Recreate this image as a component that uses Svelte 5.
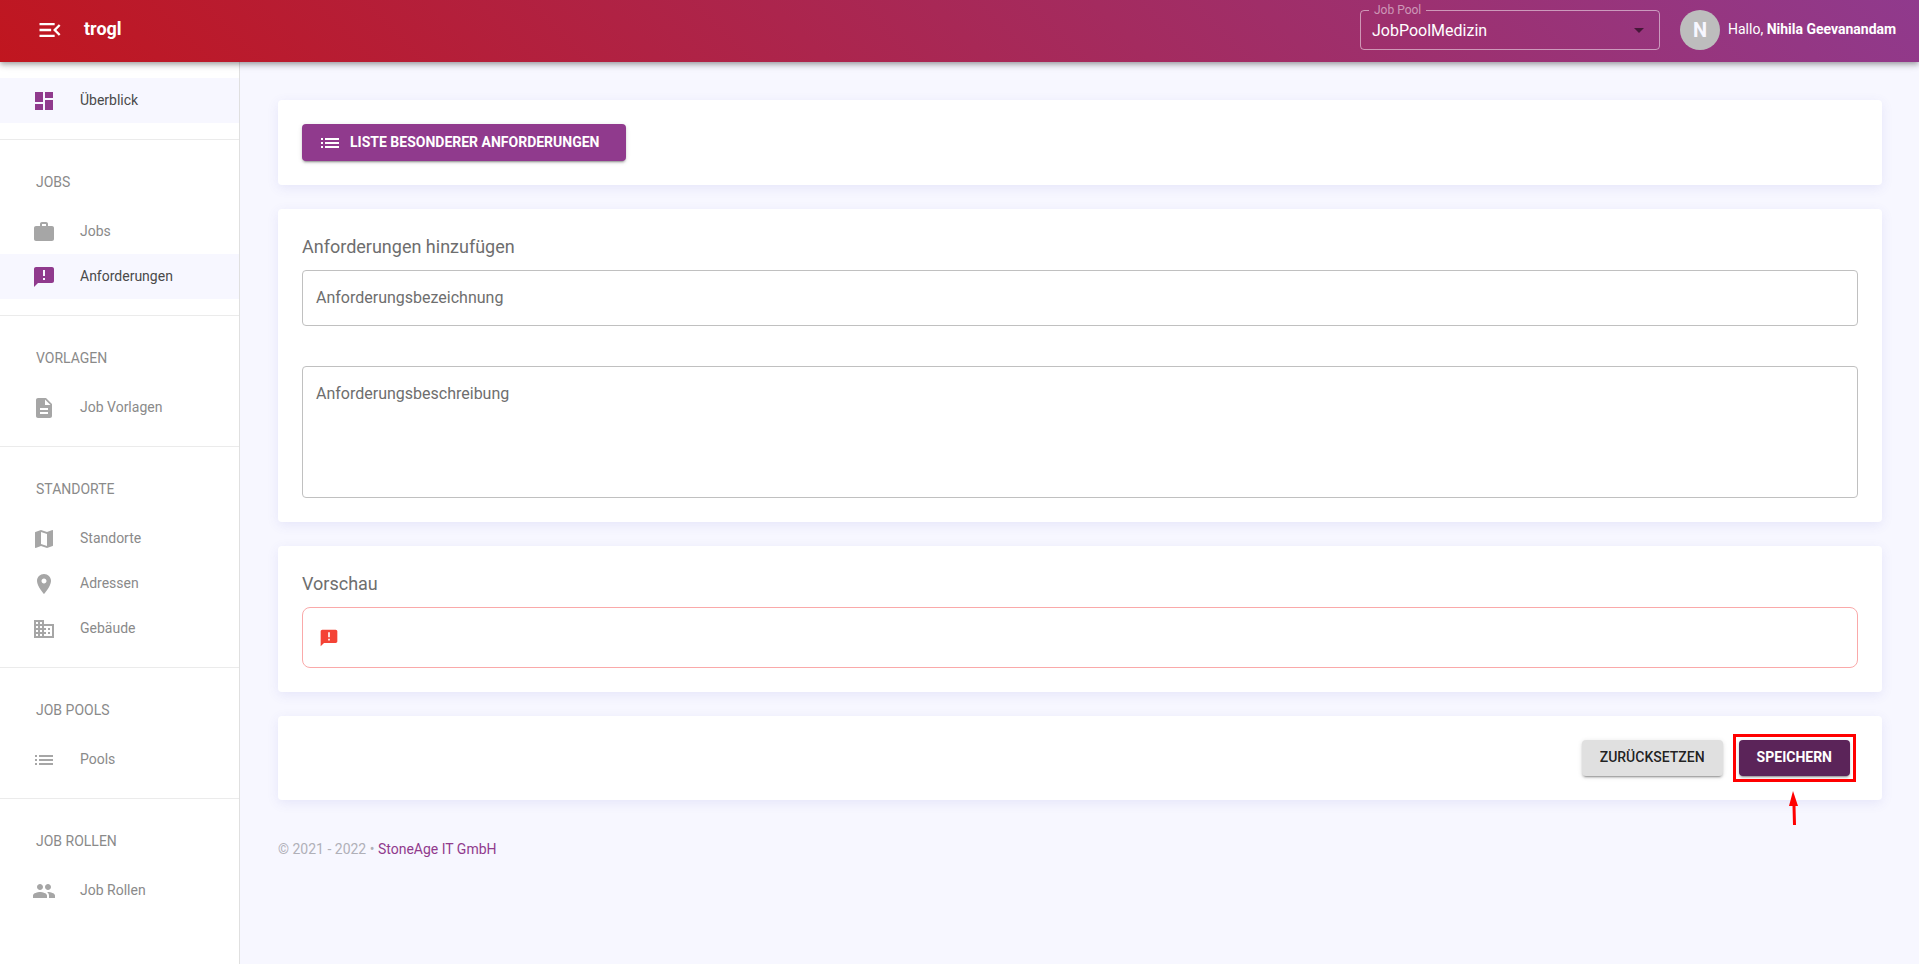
<script>
  const icons = {
    dashboard: "M3 13h8V3H3v10zm0 8h8v-6H3v6zm10 0h8V11h-8v10zm0-18v6h8V3h-8z",
    work: "M20 6h-4V4c0-1.11-.89-2-2-2h-4c-1.11 0-2 .89-2 2v2H4c-1.11 0-1.99.89-1.99 2L2 19c0 1.11.89 2 2 2h16c1.11 0 2-.89 2-2V8c0-1.11-.89-2-2-2zm-6 0h-4V4h4v2z",
    announcement:
      "M20 2H4c-1.1 0-1.99.9-1.99 2L2 22l4-4h14c1.1 0 2-.9 2-2V4c0-1.1-.9-2-2-2zm-7 9h-2V5h2v6zm0 4h-2v-2h2v2z",
    description:
      "M14 2H6c-1.1 0-1.99.9-1.99 2L4 20c0 1.1.89 2 1.99 2H18c1.1 0 2-.9 2-2V8l-6-6zm2 16H8v-2h8v2zm0-4H8v-2h8v2zm-3-5V3.5L18.5 9H13z",
    map: "M20.5 3l-.16.03L15 5.1 9 3 3.36 4.9c-.21.07-.36.25-.36.48V20.5c0 .28.22.5.5.5l.16-.03L9 18.9l6 2.1 5.64-1.9c.21-.07.36-.25.36-.48V3.5c0-.28-.22-.5-.5-.5zM15 19l-6-2.11V5l6 2.11V19z",
    place:
      "M12 2C8.13 2 5 5.13 5 9c0 5.25 7 13 7 13s7-7.75 7-13c0-3.87-3.13-7-7-7zm0 9.5c-1.38 0-2.5-1.12-2.5-2.5s1.12-2.5 2.5-2.5 2.5 1.12 2.5 2.5-1.12 2.5-2.5 2.5z",
    business:
      "M12 7V3H2v18h20V7H12zM6 19H4v-2h2v2zm0-4H4v-2h2v2zm0-4H4V9h2v2zm0-4H4V5h2v2zm4 12H8v-2h2v2zm0-4H8v-2h2v2zm0-4H8V9h2v2zm0-4H8V5h2v2zm10 12h-8v-2h2v-2h-2v-2h2v-2h-2V9h8v10zm-2-8h-2v2h2v-2zm0 4h-2v2h2v-2z",
    list: "M3 13h2v-2H3v2zm0 4h2v-2H3v2zm0-8h2V7H3v2zm4 4h14v-2H7v2zm0 4h14v-2H7v2zM7 7v2h14V7H7z",
    people:
      "M16 11c1.66 0 2.99-1.34 2.99-3S17.66 5 16 5c-1.66 0-3 1.34-3 3s1.34 3 3 3zm-8 0c1.66 0 2.99-1.34 2.99-3S9.66 5 8 5C6.34 5 5 6.34 5 8s1.34 3 3 3zm0 2c-2.33 0-7 1.17-7 3.5V19h14v-2.5c0-2.33-4.67-3.5-7-3.5zm8 0c-.29 0-.62.02-.97.05 1.16.84 1.97 1.97 1.97 3.45V19h6v-2.5c0-2.33-4.67-3.5-7-3.5z",
    menuOpen:
      "M3 18h13v-2H3v2zm0-5h10v-2H3v2zm0-7v2h13V6H3zm18 9.59L17.42 12 21 8.41 19.59 7l-5 5 5 5L21 15.59z",
  };

  const sections = [
    { items: [{ label: "Überblick", icon: "dashboard", active: true }] },
    {
      title: "Jobs",
      items: [
        { label: "Jobs", icon: "work" },
        { label: "Anforderungen", icon: "announcement", active: true },
      ],
    },
    {
      title: "Vorlagen",
      items: [{ label: "Job Vorlagen", icon: "description" }],
    },
    {
      title: "Standorte",
      items: [
        { label: "Standorte", icon: "map" },
        { label: "Adressen", icon: "place" },
        { label: "Gebäude", icon: "business" },
      ],
    },
    { title: "Job Pools", items: [{ label: "Pools", icon: "list" }] },
    { title: "Job Rollen", items: [{ label: "Job Rollen", icon: "people" }] },
  ];

  let pool = "JobPoolMedizin";
  let name = "";
  let description = "";

  const reset = () => {
    name = "";
    description = "";
  };
</script>

<header class="topbar">
  <button class="menu-btn" aria-label="Menü">
    <svg viewBox="0 0 24 24" width="28" height="28"><path d={icons.menuOpen} /></svg>
  </button>
  <span class="brand">trogl</span>

  <fieldset class="pool">
    <legend><label for="pool">Job Pool</label></legend>
    <select id="pool" bind:value={pool}>
      <option>JobPoolMedizin</option>
    </select>
    <svg class="caret" viewBox="0 0 24 24" width="24" height="24"><path d="M7 10l5 5 5-5z" /></svg>
  </fieldset>

  <div class="user">
    <span class="avatar">N</span>
    <span class="greeting">Hallo, <b>Nihila Geevanandam</b></span>
  </div>
</header>

<div class="layout">
  <nav class="sidebar">
    {#each sections as section}
      <section class="group">
        {#if section.title}
          <h2>{section.title}</h2>
        {/if}
        {#each section.items as item}
          <a href="#top" class="item" class:active={item.active}>
            <svg viewBox="0 0 24 24" width="24" height="24"><path d={icons[item.icon]} /></svg>
            <span>{item.label}</span>
          </a>
        {/each}
      </section>
    {/each}
  </nav>

  <main>
    <div class="card">
      <button class="btn primary with-icon">
        <svg viewBox="0 0 24 24" width="24" height="24"><path d={icons.list} /></svg>
        <span>Liste besonderer Anforderungen</span>
      </button>
    </div>

    <div class="card">
      <h1>Anforderungen hinzufügen</h1>
      <div class="field">
        <input id="name" type="text" placeholder=" " bind:value={name} />
        <label for="name">Anforderungsbezeichnung</label>
      </div>
      <div class="field">
        <textarea id="description" placeholder=" " bind:value={description}></textarea>
        <label for="description">Anforderungsbeschreibung</label>
      </div>
    </div>

    <div class="card">
      <h1>Vorschau</h1>
      <div class="preview">
        <svg viewBox="0 0 24 24" width="20" height="20"><path d={icons.announcement} /></svg>
        <span>{name}</span>
      </div>
    </div>

    <div class="card actions">
      <button class="btn" on:click={reset}><span>Zurücksetzen</span></button>
      <div class="marked">
        <button class="btn primary dark"><span>Speichern</span></button>
        <svg class="arrow" viewBox="0 0 10 34" width="10" height="34">
          <path d="M4 0L9 15H6.5L7 34H4L3.500 15H0z" />
        </svg>
      </div>
    </div>

    <footer>© 2021 - 2022 • <a href="#top">StoneAge IT GmbH</a></footer>
  </main>
</div>

<style>
  :global(body) {
    margin: 0;
    background: #f7f7ff;
    color: rgba(0, 0, 0, 0.87);
    font-family: Roboto, sans-serif;
    font-size: 14px;
  }

  svg {
    display: block;
    flex: none;
    fill: currentColor;
  }

  a {
    text-decoration: none;
  }

  .topbar {
    position: relative;
    z-index: 10;
    display: flex;
    align-items: center;
    height: 62px;
    box-sizing: border-box;
    padding: 0 19px 2px 36px;
    color: #fff;
    background: linear-gradient(45deg, #c0161f, #903a8d);
    box-shadow:
      0 2px 4px -1px rgba(0, 0, 0, 0.2),
      0 4px 5px rgba(0, 0, 0, 0.14),
      0 1px 10px rgba(0, 0, 0, 0.12);
  }

  .menu-btn {
    padding: 0;
    border: none;
    background: none;
    color: inherit;
    cursor: pointer;
  }

  .brand {
    flex: 1;
    margin-left: 20px;
    padding-bottom: 4px;
    font-size: 18px;
    font-weight: 700;
  }

  .pool {
    position: relative;
    box-sizing: border-box;
    width: 300px;
    height: 47px;
    margin: -7px 20px 0 0;
    padding: 0;
    border: 1px solid rgba(255, 255, 255, 0.5);
    border-radius: 4px;
  }

  .pool legend {
    height: 14px;
    margin-left: 8px;
    padding: 0 5px;
    color: rgba(255, 255, 255, 0.5);
    font-size: 12px;
    line-height: 14px;
  }

  .pool select {
    width: 100%;
    height: 32px;
    padding: 0 32px 6px 11px;
    border: none;
    outline: none;
    appearance: none;
    background: transparent;
    color: #fff;
    font-family: inherit;
    font-size: 16px;
    cursor: pointer;
  }

  .caret {
    position: absolute;
    right: 8px;
    bottom: 7px;
    color: rgba(0, 0, 0, 0.54);
    pointer-events: none;
  }

  .user {
    display: flex;
    align-items: center;
    gap: 8px;
  }

  .avatar {
    width: 40px;
    height: 40px;
    border-radius: 50%;
    background: #bdbdbd;
    color: #f7f7ff;
    font-size: 20px;
    font-weight: 700;
    line-height: 40px;
    text-align: center;
  }

  .greeting {
    min-width: 172px;
    padding-bottom: 2px;
  }

  .layout {
    display: flex;
    min-height: calc(100vh - 62px);
  }

  .sidebar {
    box-sizing: border-box;
    width: 240px;
    flex: none;
    background: #fff;
    border-right: 1px solid #e0e0e0;
  }

  .group {
    padding: 16px 0;
    border-bottom: 1px solid #ebebeb;
  }

  .group:last-child {
    border-bottom: none;
  }

  .group h2 {
    margin: 0;
    padding-left: 36px;
    color: #8a8a8a;
    font-size: 14px;
    font-weight: 400;
    line-height: 53px;
    text-transform: uppercase;
  }

  .item {
    display: flex;
    align-items: center;
    gap: 24px;
    height: 45px;
    padding-left: 32px;
    color: #8a8a8a;
  }

  .item span {
    padding-bottom: 2px;
  }

  .item svg {
    color: #a6a6a6;
  }

  .item.active {
    background: #f7f7ff;
    color: #4a4a4a;
  }

  .item.active svg {
    color: #903a8d;
  }

  main {
    display: flex;
    flex: 1;
    flex-direction: column;
    gap: 24px;
    min-width: 0;
    padding: 38px 37px 38px 38px;
  }

  .card {
    padding: 24px;
    border-radius: 4px;
    background: #fff;
    box-shadow: 0 3px 12px rgba(80, 80, 200, 0.1);
  }

  h1 {
    margin: 0 0 9px;
    color: #6e6e6e;
    font-size: 18px;
    font-weight: 400;
    line-height: 28px;
  }

  .btn {
    display: flex;
    align-items: center;
    gap: 8px;
    min-height: 36px;
    padding: 0 18px;
    border: none;
    border-radius: 4px;
    background: #e0e0e0;
    color: rgba(0, 0, 0, 0.87);
    font-family: inherit;
    font-size: 14px;
    font-weight: 500;
    text-transform: uppercase;
    box-shadow:
      0 3px 1px -2px rgba(0, 0, 0, 0.2),
      0 2px 2px rgba(0, 0, 0, 0.14),
      0 1px 5px rgba(0, 0, 0, 0.12);
    cursor: pointer;
  }

  .btn span {
    padding-bottom: 2px;
  }

  .btn.with-icon {
    min-height: 37px;
    padding: 0 27px 0 16px;
  }

  .btn.primary {
    background: #903a8d;
    color: #fff;
    font-weight: 700;
  }

  .btn.dark {
    background: #5b2459;
  }

  .field {
    position: relative;
  }

  .field + .field {
    margin-top: 40px;
  }

  .field input,
  .field textarea {
    display: block;
    box-sizing: border-box;
    width: 100%;
    height: 56px;
    padding: 16px 13px;
    border: 1px solid #c0c0c0;
    border-radius: 4px;
    outline: none;
    background: transparent;
    color: inherit;
    font-family: inherit;
    font-size: 16px;
    resize: none;
  }

  .field textarea {
    height: 132px;
  }

  .field label {
    position: absolute;
    top: 16px;
    left: 14px;
    color: #6e6e6e;
    font-size: 16px;
    line-height: 23px;
    pointer-events: none;
  }

  .field :not(:placeholder-shown) + label {
    top: -8px;
    padding: 0 5px;
    background: #fff;
    font-size: 12px;
    line-height: 16px;
  }

  .preview {
    display: flex;
    align-items: center;
    gap: 12px;
    box-sizing: border-box;
    min-height: 61px;
    padding: 0 16px;
    border: 1px solid #faa9a9;
    border-radius: 8px;
  }

  .preview svg {
    color: #f44336;
  }

  .actions {
    display: flex;
    justify-content: flex-end;
    gap: 16px;
    padding-right: 32px;
  }

  .marked {
    position: relative;
    outline: 3px solid #f00;
    outline-offset: 3px;
  }

  .arrow {
    position: absolute;
    top: 51px;
    left: 50px;
    color: #f00;
  }

  footer {
    margin-top: 15px;
    color: #b0b0b8;
    line-height: 20px;
  }

  footer a {
    color: #903a8d;
  }
</style>
